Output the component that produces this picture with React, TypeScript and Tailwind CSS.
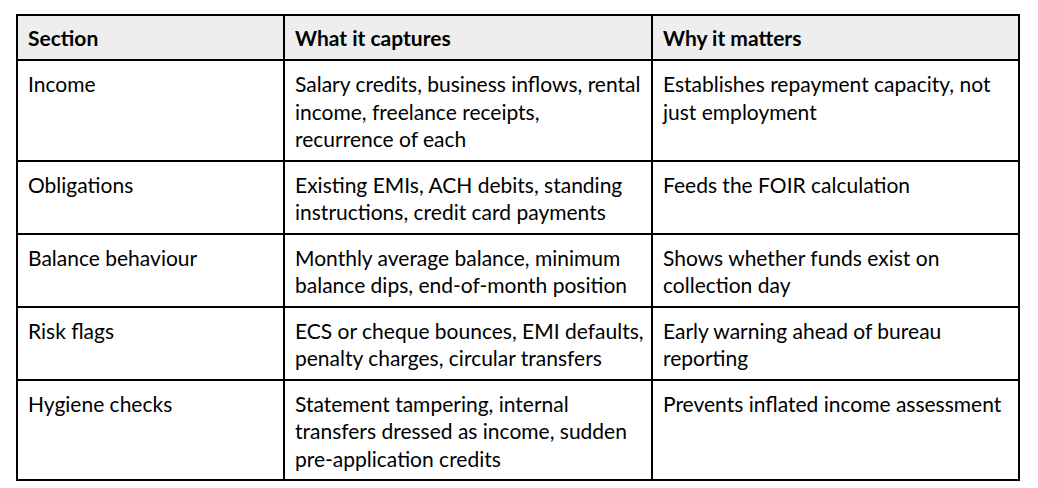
const rows: [string, string[], string[]][] = [
  [
    "Income",
    ["Salary credits, business inflows, rental", "income, freelance receipts,", "recurrence of each"],
    ["Establishes repayment capacity, not", "just employment"],
  ],
  [
    "Obligations",
    ["Existing EMIs, ACH debits, standing", "instructions, credit card payments"],
    ["Feeds the FOIR calculation"],
  ],
  [
    "Balance behaviour",
    ["Monthly average balance, minimum", "balance dips, end-of-month position"],
    ["Shows whether funds exist on", "collection day"],
  ],
  [
    "Risk flags",
    ["ECS or cheque bounces, EMI defaults,", "penalty charges, circular transfers"],
    ["Early warning ahead of bureau", "reporting"],
  ],
  [
    "Hygiene checks",
    ["Statement tampering, internal", "transfers dressed as income, sudden", "pre-application credits"],
    ["Prevents inflated income assessment"],
  ],
];

function Lines({ lines }: { lines: string[] }) {
  return (
    <>
      {lines.map((l, i) => (
        <div key={i} className="whitespace-nowrap">
          {l}
        </div>
      ))}
    </>
  );
}

export default function App() {
  return (
    <div className="w-[1038px] h-[488px] bg-white pl-[16px] pt-[14px] font-['Lato',sans-serif] text-[21px] leading-[27.5px] text-black">
      <table className="w-[1002px] border-collapse border-2 border-black table-fixed">
        <colgroup>
          <col className="w-[267px]" />
          <col className="w-[368px]" />
          <col className="w-[367px]" />
        </colgroup>
        <thead>
          <tr className="bg-[#eeeeee] h-[45px]">
            <th className="border-2 border-black text-left font-bold px-[10px] align-middle">Section</th>
            <th className="border-2 border-black text-left font-bold px-[10px] align-middle">What it captures</th>
            <th className="border-2 border-black text-left font-bold px-[10px] align-middle">Why it matters</th>
          </tr>
        </thead>
        <tbody>
          {rows.map((r) => (
            <tr key={r[0]}>
              <td className="border-2 border-black align-top px-[10px] pt-[9px] pb-[7px]">{r[0]}</td>
              <td className="border-2 border-black align-top px-[10px] pt-[9px] pb-[7px]">
                <Lines lines={r[1]} />
              </td>
              <td className="border-2 border-black align-top px-[10px] pt-[9px] pb-[7px]">
                <Lines lines={r[2]} />
              </td>
            </tr>
          ))}
        </tbody>
      </table>
    </div>
  );
}
